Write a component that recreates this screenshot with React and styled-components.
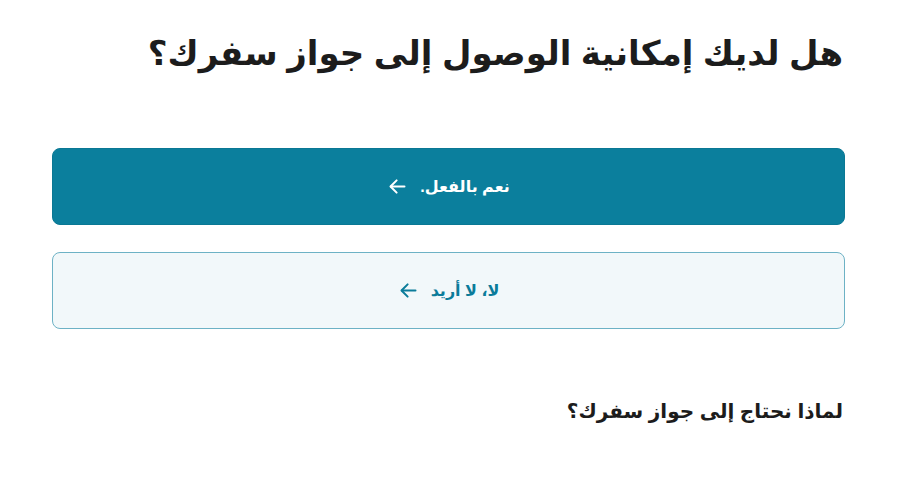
import React from "react";
import styled, { createGlobalStyle } from "styled-components";

const GlobalStyle = createGlobalStyle`
  html, body {
    margin: 0;
    padding: 0;
    background: #ffffff;
  }
  body {
    font-family: "Liberation Sans", "DejaVu Sans", Arial, sans-serif;
    color: #1c1c1c;
  }
`;

function ArrowLeft({ color }) {
  return (
    <svg width="21" height="21" viewBox="0 0 24 24" fill="none" stroke={color} strokeWidth="2.3" strokeLinecap="round" strokeLinejoin="round">
      <path d="M20 12H4.5" />
      <path d="M11 5l-7 7 7 7" />
    </svg>
  );
}

function App() {
  return (
    <Page dir="rtl">
      <GlobalStyle />
      <Title>هل لديك إمكانية الوصول إلى جواز سفرك؟</Title>
      <Options>
        <Choice primary>
          <span>نعم بالفعل.</span>
          <ArrowLeft color="#ffffff" />
        </Choice>
        <Choice>
          <span>لا، لا أريد</span>
          <ArrowLeft color="#0b7c9a" />
        </Choice>
      </Options>
      <Why>لماذا نحتاج إلى جواز سفرك؟</Why>
    </Page>
  );
}

const Page = styled.main`
  padding: 26px 57px 0 52px;
  display: flex;
  flex-direction: column;
`;

const Title = styled.h1`
  margin: 0;
  font-size: 34px;
  font-weight: 700;
  line-height: 54px;
  color: #1c1c1c;
`;

const Options = styled.div`
  margin-top: 68px;
  display: flex;
  flex-direction: column;
  gap: 27px;
`;

const Choice = styled.button`
  height: 77px;
  margin-left: 0;
  margin-right: -2px;
  border-radius: 8px;
  display: flex;
  align-items: center;
  justify-content: center;
  gap: 12px;
  font-family: inherit;
  font-size: 16px;
  font-weight: 700;
  cursor: pointer;
  background: ${(p) => (p.primary ? "#0b7f9d" : "#f2f8fa")};
  color: ${(p) => (p.primary ? "#ffffff" : "#0b7c9a")};
  border: ${(p) => (p.primary ? "1px solid #0a7894" : "1.5px solid #6db2c5")};
`;

const Why = styled.p`
  margin: 70px 0 0;
  font-size: 20px;
  font-weight: 700;
  color: #1c1c1c;
`;

export default App;
